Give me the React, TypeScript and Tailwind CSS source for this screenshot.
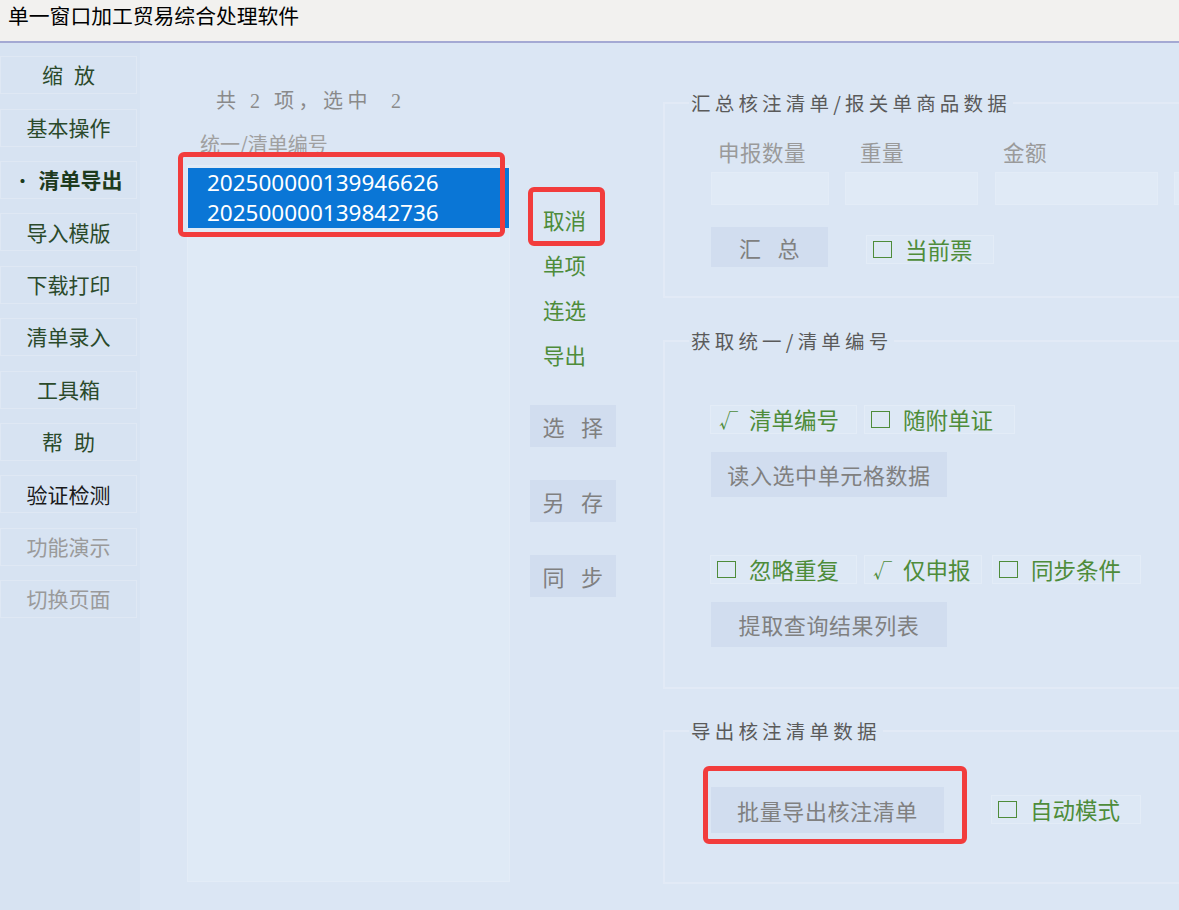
import React from "react";

const CJK = "'Noto Sans CJK SC', sans-serif";
const SERIF = "'Liberation Serif', 'Noto Sans CJK SC', serif";

function SideItem({ children, color, bold }: { children: React.ReactNode; color: string; bold?: boolean }) {
  return (
    <div className="h-[52.4px] flex items-center">
      <div
        className={`w-[137px] h-[38px] border border-[#dfe8f4] flex items-center justify-center text-[21px] ${bold ? "font-bold" : ""}`}
        style={{ color }}
      >
        {children}
      </div>
    </div>
  );
}

function Check({ checked, label, w }: { checked: boolean; label: string; w: number }) {
  return (
    <div
      className="h-[29px] flex items-center pl-[6px] bg-[#dde8f5] border border-[#e3ecf7] text-[22.5px] text-[#4e8c3a]"
      style={{ width: w }}
    >
      <span className="w-[22px] shrink-0 flex items-center justify-start">
        {checked ? (
          <span className="ml-[2px] text-[19px] leading-none">√</span>
        ) : (
          <span className="block shrink-0 w-[19px] h-[17px] border-[1.5px] border-[#4e8c3a]" />
        )}
      </span>
      <span className="ml-[10px] leading-none">{label}</span>
    </div>
  );
}

function Btn({ children, w, h }: { children: React.ReactNode; w: number; h: number }) {
  return (
    <div
      className="bg-[#d1ddef] flex items-center justify-center text-[22px] text-[#808080] tracking-[0.6px]"
      style={{ width: w, height: h }}
    >
      {children}
    </div>
  );
}

function Spaced({ a, b, gap }: { a: string; b: string; gap: number }) {
  return (
    <span className="flex" style={{ gap }}>
      <span>{a}</span>
      <span>{b}</span>
    </span>
  );
}

function Group({ title, children, className }: { title: string; children: React.ReactNode; className?: string }) {
  return (
    <fieldset className={`border-2 border-[#e2eaf6] ${className ?? ""}`}>
      <legend className="ml-[24px] px-[2px] text-[19.5px] leading-[28px] tracking-[4.2px] text-[#5a5a5a]">{title}</legend>
      <div className="pl-[46px]">{children}</div>
    </fieldset>
  );
}

export default function App() {
  return (
    <div className="relative w-[1179px] h-[910px] overflow-hidden bg-[#dbe6f4]" style={{ fontFamily: CJK }}>
      {/* Title bar */}
      <div className="h-[43px] bg-[#f2f1ef] border-b-2 border-[#a4a9d3] pl-[8px] pt-[1px]">
        <span className="text-[20.8px] leading-[28px] text-black">单一窗口加工贸易综合处理软件</span>
      </div>

      <div className="flex h-[867px]">
        {/* Sidebar */}
        <div className="w-[140px] shrink-0 bg-[#d7e3f2] pt-[6px] flex flex-col">
          <SideItem color="#2b4a2b"><Spaced a="缩" b="放" gap={11} /></SideItem>
          <SideItem color="#2b4a2b">基本操作</SideItem>
          <SideItem color="#1d3a1d" bold>
            <span className="mr-[8px] text-[16px]">•</span>清单导出
          </SideItem>
          <SideItem color="#2b4a2b">导入模版</SideItem>
          <SideItem color="#2b4a2b">下载打印</SideItem>
          <SideItem color="#2b4a2b">清单录入</SideItem>
          <SideItem color="#2b4a2b">工具箱</SideItem>
          <SideItem color="#2b4a2b"><Spaced a="帮" b="助" gap={11} /></SideItem>
          <SideItem color="#1a1a1a">验证检测</SideItem>
          <SideItem color="#9a9a9a">功能演示</SideItem>
          <SideItem color="#9a9a9a">切换页面</SideItem>
        </div>

        {/* Main */}
        <div className="flex-1 flex min-w-0">
          {/* List column */}
          <div className="ml-[47px] w-[323px] shrink-0 pt-[44px] flex flex-col">
            <div
              className="h-[28px] leading-[28px] text-[20px] text-[#8a8a8a] whitespace-pre pl-[29px] tracking-[4.5px]"
              style={{ fontFamily: SERIF }}
            >
              共 2 项，选中  2
            </div>
            <div className="mt-[15px] h-[28px] leading-[28px] text-[20px] text-[#a0a0a0] pl-[13px]">统一/清单编号</div>
            <div className="mt-[7px] h-[717px] bg-[#dfeaf6] border border-[#e3ecf7] pt-[2px]">
              {["202500000139946626", "202500000139842736"].map((n) => (
                <div
                  key={n}
                  className="h-[30px] leading-[30px] bg-[#0a76d6] text-white text-[22.5px] pl-[19px]"
                  style={{ fontFamily: "'Noto Sans', sans-serif" }}
                >
                  {n}
                </div>
              ))}
            </div>
          </div>

          {/* Middle column */}
          <div className="ml-[20px] w-[86px] shrink-0 pt-[155px] flex flex-col">
            {["取消", "单项", "连选", "导出"].map((t) => (
              <div key={t} className="h-[45px] flex items-center pl-[13px] text-[21.5px] text-[#4e8c3a]">
                {t}
              </div>
            ))}
            <div className="mt-[27px] flex flex-col gap-[33px]">
              <Btn w={86} h={42}><Spaced a="选" b="择" gap={16} /></Btn>
              <Btn w={86} h={42}><Spaced a="另" b="存" gap={16} /></Btn>
              <Btn w={86} h={42}><Spaced a="同" b="步" gap={16} /></Btn>
            </div>
          </div>

          {/* Right column */}
          <div className="ml-[47px] w-[580px] shrink-0 pt-[46px] flex flex-col">
            <Group title="汇总核注清单/报关单商品数据" className="pb-[29px]">
              <div className="mt-[21px] h-[28px] flex items-center text-[21.5px] tracking-[0.5px] text-[#9a9a9a]">
                <span className="ml-[7px] w-[142px]">申报数量</span>
                <span className="w-[143px]">重量</span>
                <span>金额</span>
              </div>
              <div className="mt-[6px] flex">
                <div className="w-[118px] h-[33px] bg-[#e0eaf6] border border-[#e3ecf7]" />
                <div className="ml-[16px] w-[133px] h-[33px] bg-[#e0eaf6] border border-[#e3ecf7]" />
                <div className="ml-[17px] w-[163px] h-[33px] bg-[#e0eaf6] border border-[#e3ecf7]" />
                <div className="ml-[16px] w-[60px] h-[33px] bg-[#e0eaf6] border border-[#e3ecf7]" />
              </div>
              <div className="mt-[22px] flex items-start">
                <Btn w={117} h={40}><Spaced a="汇" b="总" gap={16} /></Btn>
                <div className="ml-[38px] mt-[8px]">
                  <Check checked={false} label="当前票" w={128} />
                </div>
              </div>
            </Group>

            <Group title="获取统一/清单编号" className="mt-[29px] pb-[40px]">
              <div className="mt-[50px] flex -ml-[1px] gap-[7px]">
                <Check checked label="清单编号" w={147} />
                <Check checked={false} label="随附单证" w={151} />
              </div>
              <div className="mt-[18px]">
                <Btn w={236} h={45}>读入选中单元格数据</Btn>
              </div>
              <div className="mt-[58px] flex -ml-[1px]">
                <Check checked={false} label="忽略重复" w={147} />
                <div className="ml-[7px]"><Check checked label="仅申报" w={118} /></div>
                <div className="ml-[10px]"><Check checked={false} label="同步条件" w={149} /></div>
              </div>
              <div className="mt-[18px]">
                <Btn w={236} h={45}>提取查询结果列表</Btn>
              </div>
            </Group>

            <Group title="导出核注清单数据" className="mt-[28px] pb-[49px]">
              <div className="mt-[42px] flex items-start">
                <Btn w={233} h={46}>批量导出核注清单</Btn>
                <div className="ml-[47px] mt-[8px]">
                  <Check checked={false} label="自动模式" w={150} />
                </div>
              </div>
            </Group>
          </div>
        </div>
      </div>

      {/* Red annotation boxes */}
      <div className="absolute left-[178px] top-[152px] w-[327px] h-[85px] border-[5px] border-[#f23c3c] rounded-[6px] pointer-events-none" />
      <div className="absolute left-[528px] top-[187px] w-[77px] h-[59px] border-[5px] border-[#f23c3c] rounded-[6px] pointer-events-none" />
      <div className="absolute left-[703px] top-[766px] w-[264px] h-[78px] border-[5px] border-[#f23c3c] rounded-[6px] pointer-events-none" />
    </div>
  );
}
